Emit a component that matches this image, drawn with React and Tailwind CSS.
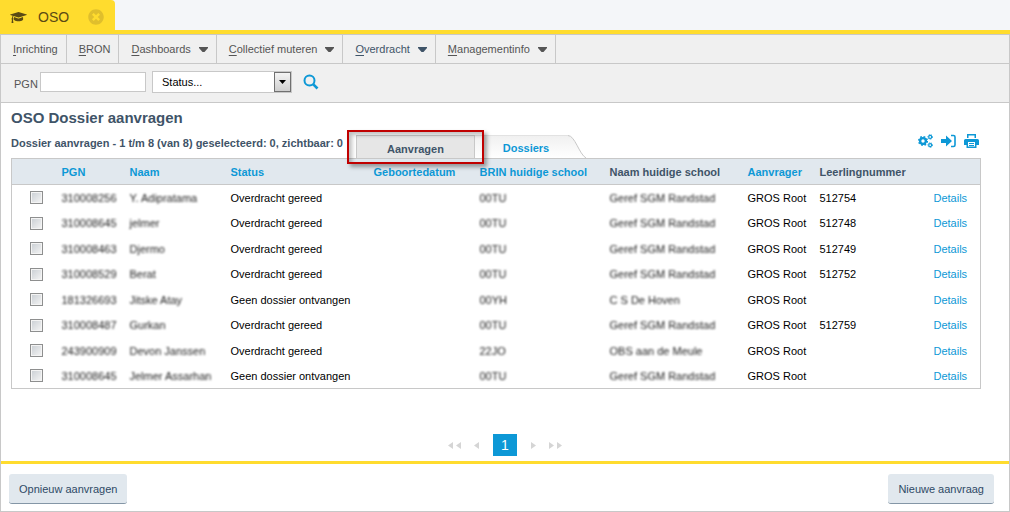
import React, { useState } from 'react';
import { FaTimesCircle } from 'react-icons/fa';

const menuItems = [
  { label: 'Inrichting' },
  { label: 'BRON' },
  { label: 'Dashboards', submenu: true },
  { label: 'Collectief muteren', submenu: true },
  { label: 'Overdracht', submenu: true, active: true },
  { label: 'Managementinfo', submenu: true },
];

const columns = [
  { label: 'PGN', width: 'w-[68px]', sortable: true },
  { label: 'Naam', width: 'w-[101px]', sortable: true },
  { label: 'Status', width: 'w-[143px]', sortable: true },
  { label: 'Geboortedatum', width: 'w-[106px]', sortable: true },
  { label: 'BRIN huidige school', width: 'w-[130px]', sortable: true },
  { label: 'Naam huidige school', width: 'w-[138px]' },
  { label: 'Aanvrager', width: 'w-[72px]', sortable: true },
  { label: 'Leerlingnummer', width: 'w-[114px]' },
];

const dossiers = [
  { pgn: '310008256', naam: 'Y. Adipratama', status: 'Overdracht gereed', brin: '00TU', school: 'Geref SGM Randstad', nummer: '512754' },
  { pgn: '310008645', naam: 'jelmer', status: 'Overdracht gereed', brin: '00TU', school: 'Geref SGM Randstad', nummer: '512748' },
  { pgn: '310008463', naam: 'Djermo', status: 'Overdracht gereed', brin: '00TU', school: 'Geref SGM Randstad', nummer: '512749' },
  { pgn: '310008529', naam: 'Berat', status: 'Overdracht gereed', brin: '00TU', school: 'Geref SGM Randstad', nummer: '512752' },
  { pgn: '181326693', naam: 'Jitske Atay', status: 'Geen dossier ontvangen', brin: '00YH', school: 'C S De Hoven', nummer: '' },
  { pgn: '310008487', naam: 'Gurkan', status: 'Overdracht gereed', brin: '00TU', school: 'Geref SGM Randstad', nummer: '512759' },
  { pgn: '243900909', naam: 'Devon Janssen', status: 'Overdracht gereed', brin: '22JO', school: 'OBS aan de Meule', nummer: '' },
  { pgn: '310008645', naam: 'Jelmer Assarhan', status: 'Geen dossier ontvangen', brin: '00TU', school: 'Geref SGM Randstad', nummer: '' },
];

const Caret = () => (
  <svg viewBox="0 0 9 5" className="h-[5px] w-[9px]" fill="currentColor" aria-hidden="true">
    <path d="M0 0h9v1L5.5 5h-2L0 1z" />
  </svg>
);

const CapIcon = () => (
  <svg viewBox="0 0 2304 1792" className="h-[13px] w-[17px]" fill="currentColor" aria-hidden="true">
    <path d="M1774 836l18 316q4 69-82 128t-235 93.5-323 34.5-323-34.5-235-93.5-82-128l18-316 574 181q22 7 48 7t48-7zM2304 512q0 23-22 31l-1120 352q-4 1-10 1t-10-1l-652-206q-43 34-71 111.5t-34 178.5q63 36 63 109 0 69-58 107l58 433q2 14-8 25-9 11-24 11h-192q-15 0-24-11-10-11-8-25l58-433q-58-38-58-107 0-73 65-111 11-207 98-330l-333-104q-22-8-22-31t22-31l1120-352q4-1 10-1t10 1l1120 352q22 8 22 31z" />
  </svg>
);

const GearsIcon = () => (
  <svg viewBox="0 0 15 14" className="h-[14px] w-[15px]" fill="none" stroke="currentColor" aria-hidden="true">
    <circle cx="5" cy="7" r="2.9" strokeWidth="2.4" />
    <circle cx="5" cy="7" r="4.3" strokeWidth="1.5" strokeDasharray="1.7 1.677" />
    <circle cx="12.2" cy="2.9" r="1.5" strokeWidth="1.2" />
    <circle cx="12.2" cy="2.9" r="2.3" strokeWidth="1" strokeDasharray="1 1.065" />
    <circle cx="12.2" cy="11.1" r="1.5" strokeWidth="1.2" />
    <circle cx="12.2" cy="11.1" r="2.3" strokeWidth="1" strokeDasharray="1 1.065" />
  </svg>
);

const SignInIcon = () => (
  <svg viewBox="0 0 15 14" className="h-[14px] w-[15px]" aria-hidden="true">
    <path d="M0 5h5V1.5L11 7l-6 5.500V9H0z" fill="currentColor" />
    <path d="M10 1.500h2.500q1.500 0 1.500 1.500v8q0 1.500-1.500 1.500H10" fill="none" stroke="currentColor" strokeWidth="1.600" />
  </svg>
);

const PrintIcon = () => (
  <svg viewBox="0 0 15 14" className="h-[14px] w-[15px]" fill="currentColor" aria-hidden="true">
    <path d="M3 0h9v4h-1.500V1.500h-6V4H3z" />
    <path fillRule="evenodd" d="M1.500 5h12Q15 5 15 6.500V11h-2.500v3h-10v-3H0V6.500Q0 5 1.500 5zM4 8v4.500h7V8z" />
    <path d="M5 9h5v1H5zM5 11h5v1H5z" />
  </svg>
);

const AppTab = () => (
  <header className="border-b-4 border-[#ffdc2e] bg-[#f4f6f9]">
    <div className="flex h-[30px] w-[115px] items-center rounded-tr bg-[#ffdc2e] pt-1 pl-[10px] text-[#5b4a14]">
      <CapIcon />
      <span className="ml-[11px] text-sm">OSO</span>
      <button aria-label="Sluiten" className="ml-[19px] text-[#e0bf2c]">
        <FaTimesCircle className="h-4 w-4" />
      </button>
    </div>
  </header>
);

const MenuBar = () => (
  <nav className="flex h-[29px] border-b border-[#c8c8c8] bg-[#f0f0f0]">
    {menuItems.map((item) => (
      <button
        key={item.label}
        className={`flex items-center gap-2 border-r border-[#c8c8c8] pr-2 pl-3 ${
          item.active ? 'text-[#3f5468]' : 'text-[#555555]'
        }`}
      >
        <span>
          <span className="underline underline-offset-2">{item.label[0]}</span>
          {item.label.slice(1)}
        </span>
        {item.submenu && <Caret />}
      </button>
    ))}
  </nav>
);

const SearchBar = () => (
  <form className="flex h-[39px] items-center border-b border-[#c8c8c8] bg-[#f0f0f0] pb-[2px] pl-[13px]" onSubmit={(e) => e.preventDefault()}>
    <label htmlFor="pgn" className="w-[26px] pt-[3px] text-[#555555]">PGN</label>
    <input id="pgn" type="text" className="h-5 w-[106px] border border-[#c8c8c8] bg-white px-1" />
    <div className="relative ml-[6px] w-[140px]">
      <select aria-label="Status" className="block h-[22px] w-full appearance-none border border-[#c8c8c8] bg-white pl-[9px] text-black">
        <option>Status...</option>
        <option>Overdracht gereed</option>
        <option>Geen dossier ontvangen</option>
      </select>
      <span className="pointer-events-none absolute top-px right-px flex h-5 w-[17px] items-center justify-center border border-[#707070] bg-linear-to-b from-[#f4f4f4] to-[#cfcfcf] text-black">
        <svg viewBox="0 0 7 4" className="h-1 w-[7px]" fill="currentColor" aria-hidden="true">
          <path d="M0 0h7L3.5 4z" />
        </svg>
      </span>
    </div>
    <button aria-label="Zoeken" className="ml-[11px] text-[#0d98d6]">
      <svg viewBox="0 0 16 16" className="h-4 w-4" fill="none" stroke="currentColor" aria-hidden="true">
        <circle cx="6.5" cy="6.5" r="5" strokeWidth="2" />
        <path d="M10.3 10.3L14.5 14.5" strokeWidth="2.6" />
      </svg>
    </button>
  </form>
);

const Tabs = () => (
  <div className="relative flex">
    <button className="h-[23px] w-[119px] border border-b-0 border-[#c8c8c8] bg-[#e6e6e6] pt-[3px] font-bold text-[#3f5468]">
      Aanvragen
    </button>
    <button className="relative h-[23px] w-[112px] pt-[3px] pr-[10px] font-bold text-[#0d98d6]">
      <svg viewBox="0 0 112 23" className="absolute inset-0 h-full w-full" preserveAspectRatio="none" aria-hidden="true">
        <defs>
          <linearGradient id="tab" x1="0" y1="0" x2="0" y2="1">
            <stop offset="0" stopColor="#f0f0f0" />
            <stop offset="1" stopColor="#ffffff" />
          </linearGradient>
        </defs>
        <path d="M0 .5H93C100 .5 104 19 112 23H0z" fill="url(#tab)" />
        <path d="M0 .5H93" stroke="#e2e2e2" />
        <path d="M93 .5C100 .5 104 19 111 23" fill="none" stroke="#c8c8c8" />
      </svg>
      <span className="relative">Dossiers</span>
    </button>
    {/* Markering rond het actieve tabblad */}
    <div className="pointer-events-none absolute -top-[5px] -left-[9px] z-10 h-[34px] w-[137px] border-2 border-[#c00000] shadow-[3px_3px_4px_rgba(0,0,0,0.35),inset_3px_3px_4px_rgba(0,0,0,0.25)]" />
  </div>
);

const Blurred = ({ children }) => <span className="inline-block text-[#222222] blur-[1px]">{children}</span>;

const DossierTable = () => {
  const [selected, setSelected] = useState([]);

  const toggle = (index) => {
    setSelected(selected.includes(index) ? selected.filter((i) => i !== index) : [...selected, index]);
  };

  return (
    <table className="w-full table-fixed border-collapse border border-[#c8c8c8] text-left whitespace-nowrap">
      <thead>
        <tr className="h-[26px] border-b border-[#c8c8c8] bg-[#e1e8ee]">
          <th className="w-[50px] p-0" aria-label="Selectie" />
          {columns.map((column) => (
            <th key={column.label} className={`${column.width} p-0 font-bold ${column.sortable ? 'text-[#0d98d6]' : 'text-[#3f5468]'}`}>
              {column.label}
            </th>
          ))}
          <th className="p-0" aria-label="Details" />
        </tr>
      </thead>
      <tbody className="text-black">
        {dossiers.map((dossier, index) => (
          <tr key={index} className="odd:h-[26px] even:h-[25px]">
            <td className="p-0 pl-[18px]">
              <input
                type="checkbox"
                aria-label={`Selecteer ${dossier.naam}`}
                checked={selected.includes(index)}
                onChange={() => toggle(index)}
                className="block h-[13px] w-[13px] appearance-none border border-[#8e8f8f] bg-linear-to-br from-[#c9ced3] to-[#f6f6f6] shadow-[inset_0_0_0_1px_#f4f4f4] checked:bg-[#0d98d6]"
              />
            </td>
            <td className="p-0"><Blurred>{dossier.pgn}</Blurred></td>
            <td className="p-0"><Blurred>{dossier.naam}</Blurred></td>
            <td className="p-0">{dossier.status}</td>
            <td className="p-0" />
            <td className="p-0"><Blurred>{dossier.brin}</Blurred></td>
            <td className="p-0"><Blurred>{dossier.school}</Blurred></td>
            <td className="p-0">GROS Root</td>
            <td className="p-0">{dossier.nummer}</td>
            <td className="p-0"><a href="#details" className="text-[#0d98d6]">Details</a></td>
          </tr>
        ))}
      </tbody>
    </table>
  );
};

const Arrow = ({ right }) => (
  <svg viewBox="0 0 5 7" className="h-[7px] w-[5px]" fill="currentColor" aria-hidden="true">
    <path d={right ? 'M0 0v7L5 3.5z' : 'M5 0v7L0 3.5z'} />
  </svg>
);

const Pagination = () => (
  <div className="flex items-center justify-center text-[#d5d5d5]">
    <button aria-label="Eerste pagina" className="flex gap-[3px]"><Arrow /><Arrow /></button>
    <button aria-label="Vorige pagina" className="ml-[13px]"><Arrow /></button>
    <button aria-current="page" className="mx-[14px] h-[22px] w-6 bg-[#0d98d6] text-sm leading-[22px] text-white">1</button>
    <button aria-label="Volgende pagina"><Arrow right /></button>
    <button aria-label="Laatste pagina" className="ml-[13px] flex gap-[3px]"><Arrow right /><Arrow right /></button>
  </div>
);

const FooterButton = ({ children }) => (
  <button className="h-[30px] rounded-[3px] border-b border-[#8496a6] bg-[#e1e8ee] px-[10px] text-[#2f4a66]">
    {children}
  </button>
);

const App = () => {
  return (
    <div className="flex min-h-screen flex-col bg-white font-['Liberation_Sans',Arial,sans-serif] text-[11px] leading-4">
      <AppTab />
      <div className="flex flex-1 flex-col border border-[#c8c8c8]">
        <MenuBar />
        <SearchBar />

        <main className="flex-1 pt-[5px] pr-7 pl-[10px]">
          <h1 className="text-[15px] leading-5 font-bold text-[#3f5468]">OSO Dossier aanvragen</h1>

          <div className="mt-[7px] flex h-[23px] items-start">
            <p className="w-[345px] font-bold whitespace-nowrap text-[#3f5468]">
              Dossier aanvragen - 1 t/m 8 (van 8) geselecteerd: 0, zichtbaar: 0
            </p>
            <Tabs />
            <div className="ml-auto flex h-[11px] items-center gap-2 pr-[2px] text-[#0d98d6]">
              <button aria-label="Instellingen"><GearsIcon /></button>
              <button aria-label="Exporteren"><SignInIcon /></button>
              <button aria-label="Afdrukken"><PrintIcon /></button>
            </div>
          </div>

          <DossierTable />
        </main>

        <div className="pb-[5px]">
          <Pagination />
        </div>

        <footer className="flex justify-between border-t-3 border-[#ffdc2e] pt-[10px] pr-[15px] pb-[7px] pl-2">
          <FooterButton>Opnieuw aanvragen</FooterButton>
          <FooterButton>Nieuwe aanvraag</FooterButton>
        </footer>
      </div>
    </div>
  );
};

export default App;
